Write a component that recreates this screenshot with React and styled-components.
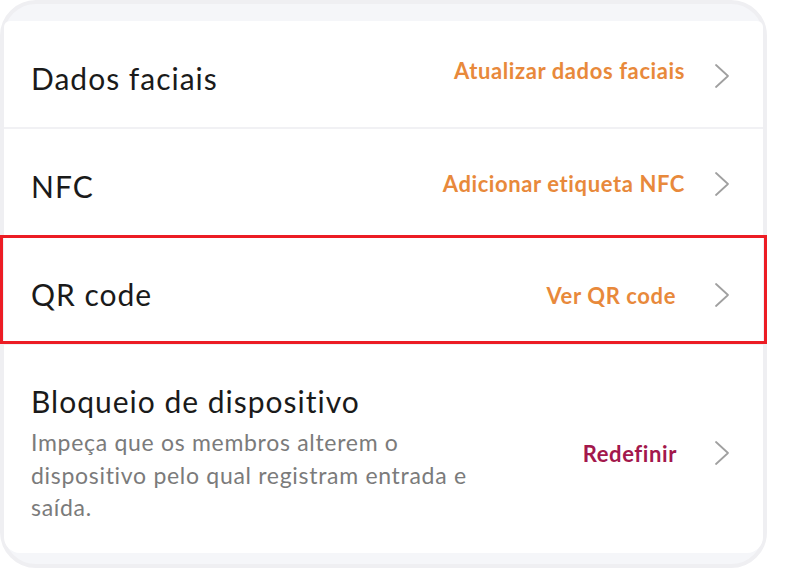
import React from "react";
import styled, { createGlobalStyle } from "styled-components";

const GlobalStyle = createGlobalStyle`
  html, body {
    margin: 0;
    padding: 0;
    background: #ffffff;
  }
  body {
    font-family: "Lato", "Noto Sans", sans-serif;
  }
`;

// drop = how far the action label / arrow sit below the row's middle
const ROWS = [
  { title: "Dados faciais", action: "Atualizar dados faciais", tone: "orange", drop: -3.5, arrowDrop: 2 },
  { title: "NFC", action: "Adicionar etiqueta NFC", tone: "orange", drop: 1.5, arrowDrop: 2 },
  { title: "QR code", action: "Ver QR code", tone: "orange", highlight: true, trail: 9, drop: 5.5, arrowDrop: 5 },
  {
    title: "Bloqueio de dispositivo",
    desc: "Impeça que os membros alterem o dispositivo pelo qual registram entrada e saída.",
    action: "Redefinir",
    tone: "crimson",
    trail: 8,
    drop: 0,
    arrowDrop: 0,
  },
];

const Chevron = ({ drop }) => (
  <Arrow $drop={drop} width="16" height="26" viewBox="0 0 16 26" fill="none">
    <polyline
      points="2,2 14,13 2,24"
      stroke="#a0a0a0"
      strokeWidth="1.8"
      strokeLinecap="round"
      strokeLinejoin="round"
    />
  </Arrow>
);

export default function App() {
  return (
    <>
      <GlobalStyle />
      <Frame>
        <Screen>
          <Card>
            {ROWS.map((row) => (
              <Row key={row.title} $tall={!!row.desc}>
                <Info>
                  <Title $lift={!row.desc}>{row.title}</Title>
                  {row.desc && <Desc>{row.desc}</Desc>}
                </Info>
                <Action $tone={row.tone} $trail={row.trail || 0} $drop={row.drop}>
                  {row.action}
                </Action>
                <Chevron drop={row.arrowDrop} />
                {row.highlight && <Highlight />}
              </Row>
            ))}
          </Card>
        </Screen>
      </Frame>
    </>
  );
}

const Frame = styled.div`
  width: 767px;
  height: 568px;
  box-sizing: border-box;
  border: 4px solid #efeff2;
  border-radius: 36px;
  background: #f5f6f9;
`;

const Screen = styled.div`
  height: 100%;
  box-sizing: border-box;
  padding: 17px 0 11px;
  clip-path: inset(0 -4px round 32px);
`;

const Card = styled.div`
  height: 100%;
  background: #ffffff;
  display: flex;
  flex-direction: column;
  border-radius: 6px 6px 16px 16px;
`;

const Row = styled.div`
  position: relative;
  display: flex;
  align-items: center;
  box-sizing: border-box;
  height: ${(p) => (p.$tall ? "auto" : "108px")};
  flex: ${(p) => (p.$tall ? "1" : "none")};
  padding: ${(p) => (p.$tall ? "8px 33px 0 27px" : "0 33px 0 27px")};
  border-bottom: 2px solid #f1f1f4;
  &:last-child {
    border-bottom: none;
  }
`;

const Info = styled.div`
  flex: 1;
  display: flex;
  flex-direction: column;
  gap: 6px;
  min-width: 0;
`;

const Title = styled.div`
  font-size: 30px;
  letter-spacing: 1px;
  color: #1a1a1a;
  line-height: 38px;
  padding-top: ${(p) => (p.$lift ? "7px" : "0")};
`;

const Desc = styled.div`
  max-width: 458px;
  font-size: 23px;
  letter-spacing: 0.7px;
  line-height: 32.5px;
  color: #7b7b7b;
`;

const Action = styled.div`
  font-size: 22px;
  font-weight: 700;
  letter-spacing: 0.6px;
  padding-top: ${(p) => Math.max(0, p.$drop * 2)}px;
  padding-bottom: ${(p) => Math.max(0, -p.$drop * 2)}px;
  margin-right: ${(p) => 29 + p.$trail}px;
  color: ${(p) => (p.$tone === "crimson" ? "#a3184c" : "#e8893b")};
  white-space: nowrap;
`;

const Arrow = styled.svg`
  flex: none;
  padding-top: ${(p) => p.$drop * 2}px;
`;

const Highlight = styled.div`
  position: absolute;
  top: -2px;
  bottom: -1px;
  left: -4px;
  right: -4px;
  border: 3px solid #ec1c24;
  pointer-events: none;
`;
